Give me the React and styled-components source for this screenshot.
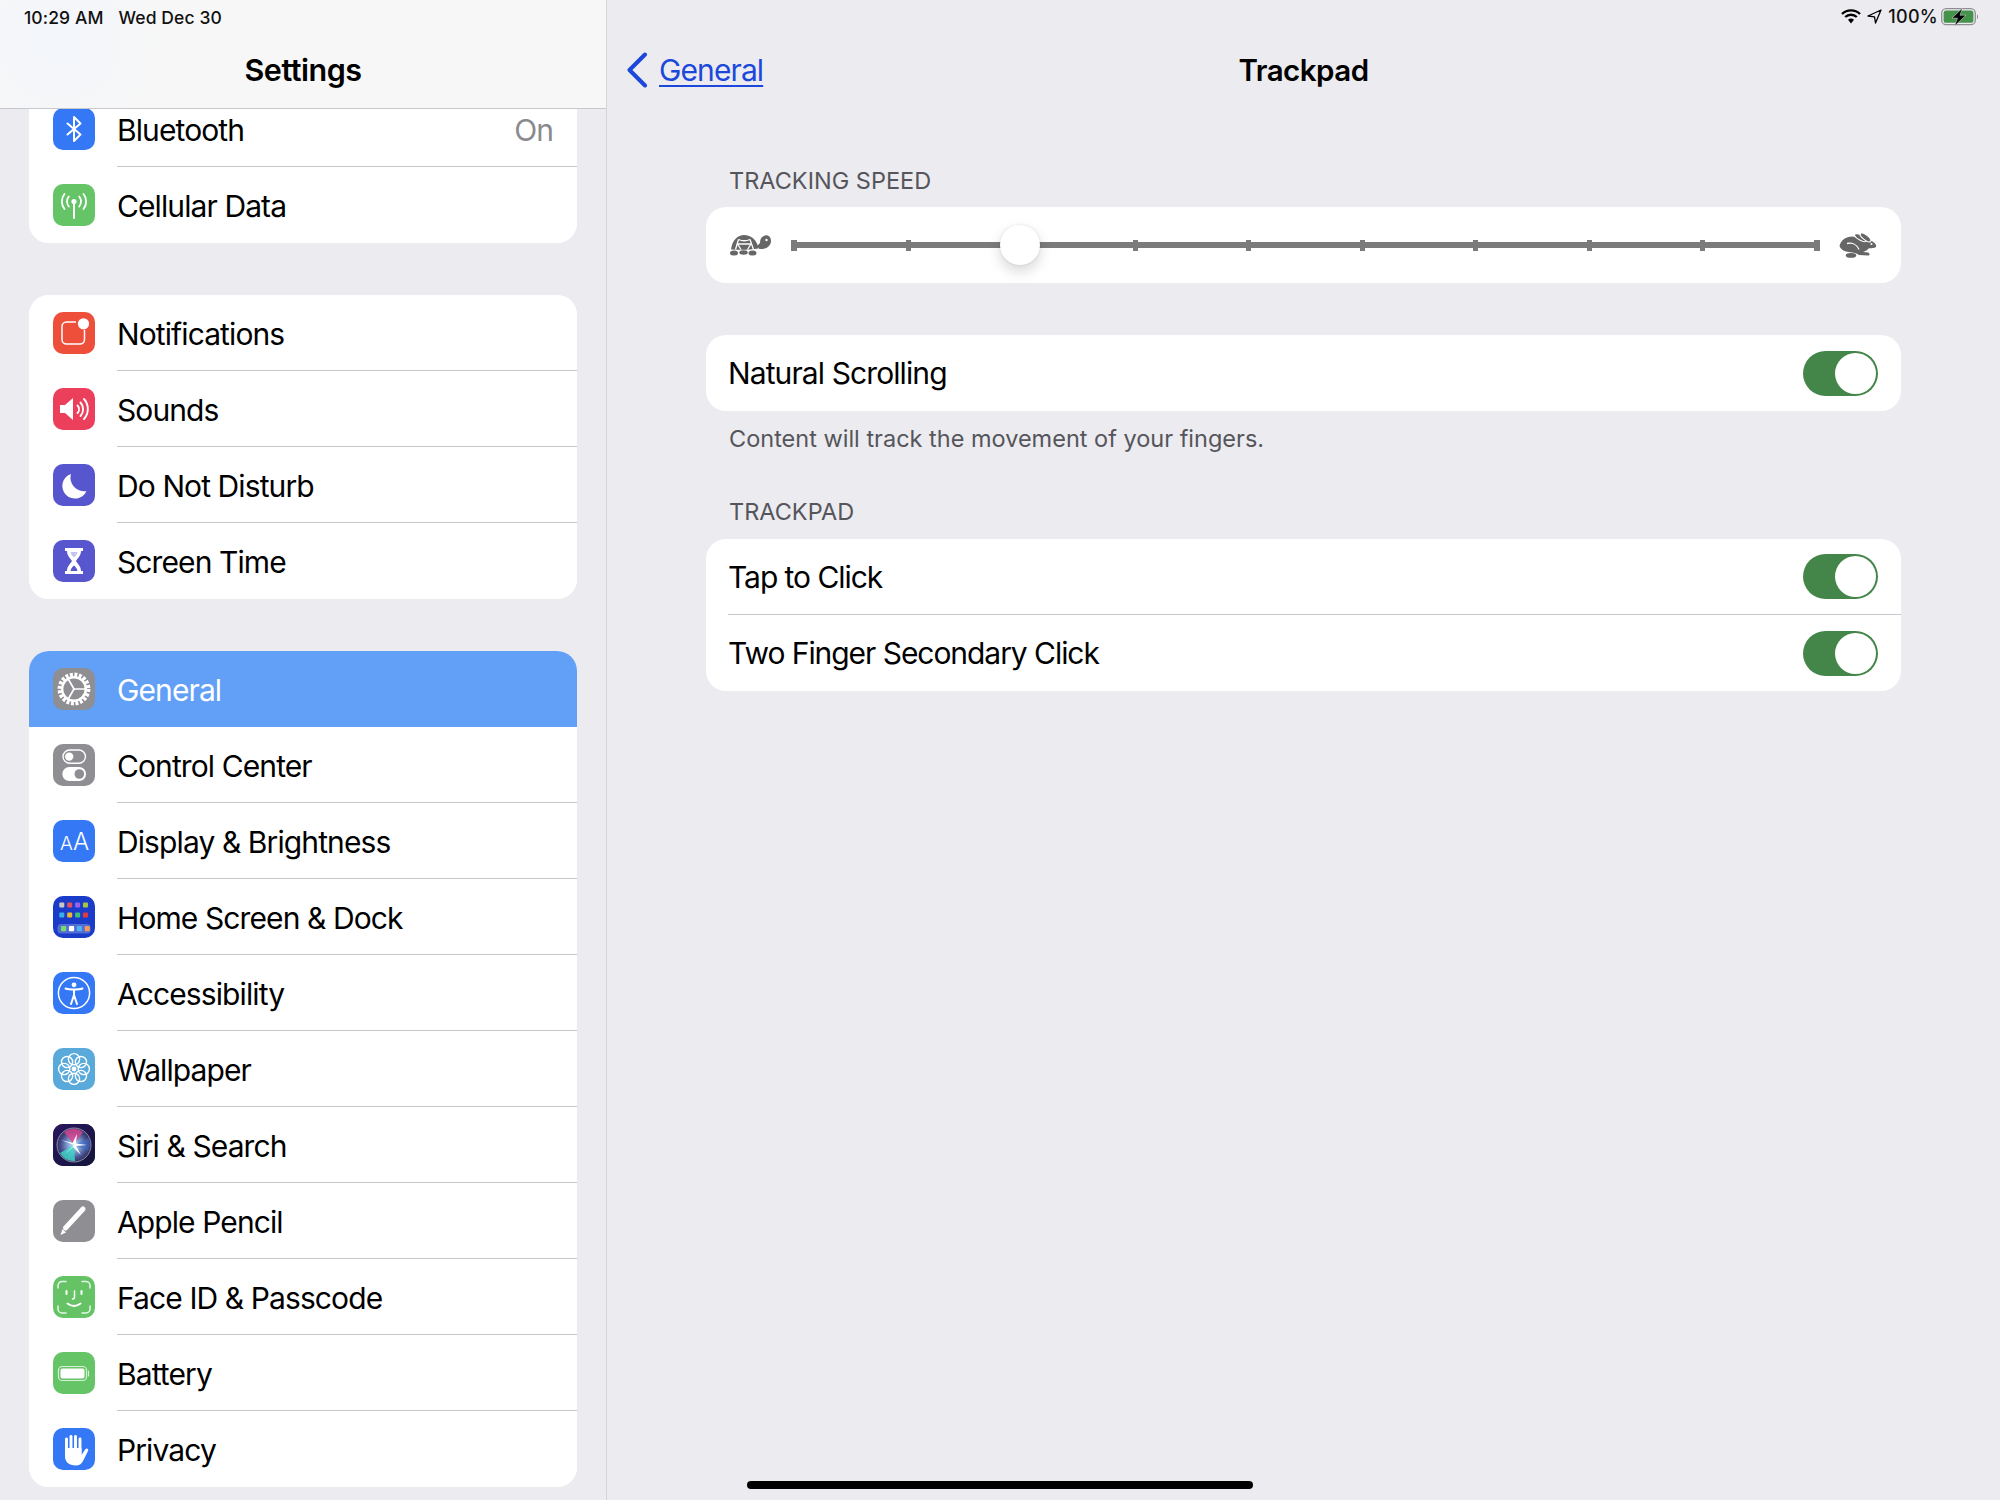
import React from 'react'
import styled, { createGlobalStyle } from 'styled-components'

const Global = createGlobalStyle`
  html, body {
    margin: 0;
    padding: 0;
    background: #ebebf0;
  }
  body {
    font-family: Inter, "Noto Sans", "Liberation Sans", sans-serif;
    color: #000;
  }
`

const Screen = styled.div`
  width: 2000px;
  height: 1500px;
  display: flex;
  overflow: hidden;
  position: relative;
  background: #ebebf0;
`

const Sidebar = styled.aside`
  width: 606px;
  height: 100%;
  flex: none;
  position: relative;
  overflow: hidden;
  border-right: 1px solid #d4d4d9;
`

const SideHeader = styled.header`
  position: absolute;
  top: 0;
  left: 0;
  right: 0;
  height: 109px;
  box-sizing: border-box;
  border-bottom: 1px solid #c8c8cc;
  background: radial-gradient(circle at 60px 40px, #f3f6fb 0, #f7f7f7 110px);
  z-index: 2;
`

const StatusText = styled.div`
  display: flex;
  gap: 15px;
  padding: 7px 0 0 24px;
  font-size: 17.5px;
  line-height: 21px;
  font-weight: 500;
  letter-spacing: 0.1px;
  color: #111;
`

const SideTitle = styled.h1`
  margin: 23px 0 0;
  text-align: center;
  font-size: 30.5px;
  line-height: 38px;
  font-weight: 600;
  letter-spacing: -0.5px;
`

const SideList = styled.div`
  display: flex;
  flex-direction: column;
  gap: 52px;
  padding: 91px 29px 0;
`

const Group = styled.section`
  background: #fff;
  border-radius: 20px;
  overflow: hidden;
`

const Row = styled.div`
  height: 76px;
  display: flex;
  align-items: center;
  gap: 23px;
  padding-left: 24px;
  background: ${p => (p.$active ? '#62a0f7' : '#fff')};
  color: ${p => (p.$active ? '#fff' : '#000')};
`

const RowBody = styled.div`
  flex: 1;
  height: 100%;
  box-sizing: border-box;
  display: flex;
  align-items: center;
  justify-content: space-between;
  padding: 2px 24px 0 0;
  margin-left: -1px;
  border-bottom: ${p => (p.$plain ? 'none' : '1px solid #c8c8cc')};
`

const Label = styled.span`
  font-size: 30px;
  letter-spacing: -0.9px;
  white-space: nowrap;
`

const WideLabel = styled(Label)`
  letter-spacing: -1.05px;
`

const Value = styled(Label)`
  color: #8a8a8e;
`

const Tile = styled.div`
  width: 42px;
  height: 42px;
  flex: none;
  border-radius: 10px;
  overflow: hidden;
  background: ${p => p.$bg};
  svg {
    display: block;
  }
`

const Detail = styled.main`
  flex: 1;
  min-width: 0;
  display: flex;
  flex-direction: column;
`

const StatusRight = styled.div`
  height: 33px;
  display: flex;
  align-items: center;
  justify-content: flex-end;
  gap: 6px;
  padding: 0 21px 0 0;
  font-size: 18px;
  font-weight: 500;
  color: #111;
`

const StatusPct = styled.span`
  margin: 0 -3px 0 0;
  letter-spacing: 0.3px;
`

const Nav = styled.nav`
  height: 74px;
  display: grid;
  grid-template-columns: 1fr auto 1fr;
  align-items: center;
`

const Back = styled.a`
  display: flex;
  align-items: center;
  gap: 11px;
  padding-left: 19px;
  color: #1b48da;
  font-size: 30px;
  letter-spacing: -0.9px;
  text-decoration: underline;
  text-decoration-thickness: 2px;
  text-underline-offset: 4px;
`

const NavTitle = styled.h2`
  margin: 0;
  font-size: 29.5px;
  font-weight: 600;
  letter-spacing: -0.5px;
`

const Content = styled.div`
  padding: 59px 99px 0;
  display: flex;
  flex-direction: column;
`

const Caption = styled.div`
  padding-left: 23px;
  font-size: 23.5px;
  line-height: 30px;
  letter-spacing: 0;
  color: #55555b;
  margin-top: ${p => p.$top || 0}px;
  margin-bottom: ${p => p.$bottom || 0}px;
`

const Card = styled.section`
  background: #fff;
  border-radius: 20px;
  overflow: hidden;
  margin-top: ${p => p.$top || 0}px;
`

const SliderRow = styled.div`
  height: 76px;
  display: flex;
  align-items: center;
  padding: 0 24px;
  gap: 20px;
`

const Track = styled.div`
  flex: 1;
  height: 6px;
  margin-right: -1px;
  position: relative;
  background: #7b7b7b;
  display: flex;
  align-items: center;
  justify-content: space-between;
`

const Tick = styled.i`
  display: block;
  width: ${p => (p.$end ? 6 : 5)}px;
  height: 11px;
  background: #7b7b7b;
`

const Thumb = styled.div`
  position: absolute;
  top: 50%;
  width: 40px;
  height: 40px;
  margin: -20px 0 0 -20px;
  border-radius: 50%;
  background: #fff;
  box-shadow: 0 6px 14px rgba(0, 0, 0, 0.16), 0 0 3px rgba(0, 0, 0, 0.1);
`

const ToggleRow = styled.div`
  height: 76px;
  display: flex;
  align-items: center;
  padding-left: 22px;
`

const ToggleBody = styled.div`
  flex: 1;
  height: 100%;
  box-sizing: border-box;
  display: flex;
  align-items: center;
  justify-content: space-between;
  padding-right: 23px;
  border-bottom: ${p => (p.$plain ? 'none' : '1px solid #c8c8cc')};
`

const Toggle = styled.div`
  width: 75px;
  height: 45px;
  box-sizing: border-box;
  padding: 2px;
  border-radius: 23px;
  background: #44864a;
  display: flex;
  justify-content: flex-end;
  &::after {
    content: '';
    width: 41px;
    height: 41px;
    border-radius: 50%;
    background: #fff;
  }
`

const HomeBar = styled.div`
  position: absolute;
  left: 747px;
  bottom: 11px;
  width: 506px;
  height: 8px;
  border-radius: 4px;
  background: #000;
  z-index: 3;
`

const Svg = ({ children }) => (
  <svg width="42" height="42" viewBox="0 0 42 42" fill="none">
    {children}
  </svg>
)

const BluetoothIcon = () => (
  <Svg>
    <path d="M14.5 15.5 L27.5 26.5 L21 33 V9 L27.5 15.5 L14.5 26.5" stroke="#fff" strokeWidth="2" strokeLinecap="round" strokeLinejoin="round" />
  </Svg>
)

const CellularIcon = () => (
  <Svg>
    <circle cx="21" cy="17.5" r="2.6" fill="#fff" />
    <path d="M21 18 V34" stroke="#fff" strokeWidth="2" strokeLinecap="round" />
    <g stroke="#fff" strokeWidth="1.9" strokeLinecap="round">
      <path d="M15.8 12.5 A8 8 0 0 0 15.8 22.5" />
      <path d="M26.2 12.5 A8 8 0 0 1 26.2 22.5" />
      <path d="M11.5 10 A12 12 0 0 0 11.5 25" />
      <path d="M30.5 10 A12 12 0 0 1 30.5 25" />
    </g>
  </Svg>
)

const NotificationsIcon = () => (
  <Svg>
    <path d="M23 10 H13.5 A4.5 4.5 0 0 0 9 14.5 V27.5 A4.5 4.5 0 0 0 13.5 32 H27 A4.5 4.5 0 0 0 31.5 27.5 V18" stroke="#fff" strokeWidth="1.5" />
    <circle cx="30.5" cy="11.8" r="5.6" fill="#fff" />
  </Svg>
)

const SoundsIcon = () => (
  <Svg>
    <path d="M7 17 H12 L20 10 V32 L12 25 H7 Z" fill="#fff" strokeLinejoin="round" />
    <g stroke="#fff" strokeWidth="1.9" strokeLinecap="round">
      <path d="M24.5 17.5 A5.5 5.5 0 0 1 24.5 25" />
      <path d="M27.5 14.5 A10 10 0 0 1 27.5 28" />
      <path d="M31 11 A15 15 0 0 1 31 31" />
    </g>
  </Svg>
)

const MoonIcon = () => (
  <Svg>
    <path d="M18 10 A12.6 12.6 0 1 0 33.5 27 A13.5 13.5 0 0 1 18 10 Z" fill="#fff" />
  </Svg>
)

const HourglassIcon = () => (
  <Svg>
    <path d="M12 8 H30 V11 H28 C28 16 24 19 23 21 C24 23 28 26 28 31 H30 V34 H12 V31 H14 C14 26 18 23 19 21 C18 19 14 16 14 11 H12 Z" fill="#fff" />
    <path d="M17.5 31 C18 28 20 26.5 21 25.5 C22 26.5 24 28 24.5 31 Z" fill="#5856ce" />
    <path d="M17.5 12 H24.5 C24 14.5 22.5 16 21 17.5 C19.5 16 18 14.5 17.5 12 Z" fill="#5856ce" opacity="0.35" />
  </Svg>
)

const GearIcon = () => (
  <Svg>
    <circle cx="21" cy="21" r="14.2" stroke="#fff" strokeWidth="4.4" strokeDasharray="2.9 1.56" />
    <circle cx="21" cy="21" r="11.8" stroke="#fff" strokeWidth="2.4" />
    <g stroke="#fff" strokeWidth="1.7" strokeLinecap="round">
      <path d="M21 21 H32" />
      <path d="M21 21 L15.5 11.5" />
      <path d="M21 21 L15.5 30.5" />
    </g>
  </Svg>
)

const SwitchesIcon = () => (
  <Svg>
    <rect x="10" y="6" width="22.5" height="13.2" rx="6.6" stroke="#fff" strokeWidth="1.4" />
    <circle cx="16.2" cy="12.6" r="4.2" fill="#fff" />
    <rect x="9.3" y="23" width="23.8" height="14" rx="7" fill="#fff" />
    <circle cx="26.3" cy="30" r="4.8" fill="#8e8e93" />
  </Svg>
)

const DisplayIcon = () => (
  <Svg>
    <g fill="#fff" fontFamily="Inter, sans-serif" fontWeight="300">
      <text x="7" y="30" fontSize="19">A</text>
      <text x="20" y="30" fontSize="24">A</text>
    </g>
  </Svg>
)

const homeDots = [
  ['#c9c9c4', '#e8505b', '#9a62e8', '#a4c640'],
  ['#38b0e8', '#f2b632', '#3cc07a', '#e23b3b']
]
const dockDots = ['#77dd66', '#ffffff', '#4db4f0', '#f0995a']

const HomeIcon = () => (
  <Svg>
    {homeDots.map((line, r) =>
      line.map((c, i) => (
        <rect key={`${r}-${i}`} x={6.3 + i * 7.9} y={6.5 + r * 10} width="5" height="5" rx="1" fill={c} />
      ))
    )}
    <rect x="4.5" y="28" width="33" height="9.5" rx="3.5" fill="#fff" opacity="0.25" />
    {dockDots.map((c, i) => (
      <rect key={c} x={8 + i * 7.9} y="30" width="5.2" height="5.2" rx="1" fill={c} />
    ))}
  </Svg>
)

const AccessibilityIcon = () => (
  <Svg>
    <circle cx="21" cy="21" r="15.6" stroke="#fff" strokeWidth="1.5" />
    <circle cx="21" cy="12.8" r="2.4" fill="#fff" />
    <path d="M12.5 16.5 C16 17.8 26 17.8 29.5 16.5 M21 18 V23 M21 23 L18 32 M21 23 L24 32" stroke="#fff" strokeWidth="2" strokeLinecap="round" />
  </Svg>
)

const WallpaperIcon = () => (
  <Svg>
    <g stroke="#fff" strokeWidth="1.4">
      {[0, 45, 90, 135, 180, 225, 270, 315].map(a => (
        <circle key={a} cx="21" cy="11.2" r="5.6" transform={`rotate(${a} 21 21)`} />
      ))}
    </g>
    <circle cx="21" cy="21" r="2.4" fill="#fff" />
  </Svg>
)

const SiriIcon = () => (
  <Svg>
    <defs>
      <linearGradient id="siriBg" x1="0" y1="0" x2="1" y2="1">
        <stop offset="0" stopColor="#2a1560" />
        <stop offset="1" stopColor="#12163a" />
      </linearGradient>
      <radialGradient id="siriOrb" cx="0.5" cy="0.5" r="0.5">
        <stop offset="0" stopColor="#c8e8f5" />
        <stop offset="0.4" stopColor="#7f9ed0" />
        <stop offset="0.75" stopColor="#48508f" />
        <stop offset="1" stopColor="#33305f" />
      </radialGradient>
    </defs>
    <rect width="42" height="42" fill="url(#siriBg)" />
    <circle cx="21" cy="21" r="17" fill="url(#siriOrb)" stroke="#8c8ca8" strokeWidth="1" />
    <path d="M21 21 L11 8 A16 16 0 0 1 30 8 Z" fill="#d9438f" opacity="0.8" />
    <path d="M21 21 L36 14 A16 16 0 0 1 35 27 Z" fill="#3f6fd0" opacity="0.55" />
    <path d="M21 21 L7 29 A16 16 0 0 0 22 37 Z" fill="#3fd8c8" opacity="0.8" />
    <path d="M21 21 L8 16 L19.5 19 L24 10 L23 19.5 L34 21 L23 22 L28 31 L20 23 L12 30 Z" fill="#fff" />
  </Svg>
)

const PencilIcon = () => (
  <Svg>
    <path d="M12.5 28 L30 9" stroke="#fff" strokeWidth="5" strokeLinecap="round" />
    <path d="M9.5 29 L7.5 35 L13 32.5 Z" fill="#fff" />
  </Svg>
)

const FaceIcon = () => (
  <Svg>
    <g stroke="#fff" strokeWidth="1.5" strokeLinecap="round" fill="none" opacity="0.85">
      <path d="M5 12 V9.5 A4 4 0 0 1 9 5.5 H13" />
      <path d="M29 5.5 H33 A4 4 0 0 1 37 9.5 V12" />
      <path d="M5 30 V33 A4 4 0 0 0 9 37 H13" />
      <path d="M29 37 H33 A4 4 0 0 0 37 33 V30" />
    </g>
    <g stroke="#fff" strokeWidth="2" strokeLinecap="round" fill="none">
      <path d="M13.5 15 V18" />
      <path d="M28.5 15 V18" />
      <path d="M21.5 15 V21 Q21.5 23 19.5 23" strokeWidth="1.5" />
      <path d="M14.5 27.5 Q21 32.5 27.5 27.5" />
    </g>
  </Svg>
)

const BatteryIcon = () => (
  <Svg>
    <rect x="5.5" y="14.5" width="28" height="14" rx="3.6" stroke="#fff" strokeOpacity="0.75" strokeWidth="1.2" />
    <rect x="7.5" y="16.5" width="24" height="10" rx="2" fill="#fff" />
    <path d="M35.5 19 V24" stroke="#fff" strokeOpacity="0.75" strokeWidth="1.2" strokeLinecap="round" />
  </Svg>
)

const HandIcon = () => (
  <Svg>
    <g stroke="#fff" strokeWidth="2.9" strokeLinecap="round">
      <path d="M13.5 11 V26" />
      <path d="M18 8.5 V24" />
      <path d="M22.5 8.5 V24" />
      <path d="M27 11 V26" />
    </g>
    <path d="M12 20 H28.5 V27 L32.5 21 C34 19.5 36 21 35 23 L30 33 C28.5 36 26 37.5 22.5 37.5 C16 37.5 12 34 12 28 Z" fill="#fff" />
  </Svg>
)

const groups = [
  [
    { label: 'Bluetooth', bg: '#3478f6', Icon: BluetoothIcon, value: 'On' },
    { label: 'Cellular Data', bg: '#65c466', Icon: CellularIcon }
  ],
  [
    { label: 'Notifications', bg: '#ee4f3b', Icon: NotificationsIcon },
    { label: 'Sounds', bg: '#ec3f5c', Icon: SoundsIcon },
    { label: 'Do Not Disturb', bg: '#5856ce', Icon: MoonIcon },
    { label: 'Screen Time', bg: '#5856ce', Icon: HourglassIcon }
  ],
  [
    { label: 'General', bg: '#8e8e93', Icon: GearIcon, active: true },
    { label: 'Control Center', bg: '#8e8e93', Icon: SwitchesIcon },
    { label: 'Display & Brightness', bg: '#3478f6', Icon: DisplayIcon },
    { label: 'Home Screen & Dock', bg: '#1a3cc8', Icon: HomeIcon },
    { label: 'Accessibility', bg: '#3478f6', Icon: AccessibilityIcon },
    { label: 'Wallpaper', bg: '#59aadb', Icon: WallpaperIcon },
    { label: 'Siri & Search', bg: '#1a1640', Icon: SiriIcon },
    { label: 'Apple Pencil', bg: '#8e8e93', Icon: PencilIcon },
    { label: 'Face ID & Passcode', bg: '#65c466', Icon: FaceIcon },
    { label: 'Battery', bg: '#65c466', Icon: BatteryIcon },
    { label: 'Privacy', bg: '#3478f6', Icon: HandIcon }
  ]
]

const WifiGlyph = () => (
  <svg width="20" height="15" viewBox="0 0 20 15" fill="none">
    <g stroke="#000" strokeWidth="2.4">
      <path d="M1 5 A13 13 0 0 1 19 5" />
      <path d="M4.2 8 A8.4 8.4 0 0 1 15.8 8" />
    </g>
    <path d="M7 10.8 A4.4 4.4 0 0 1 13 10.8 L10 14.5 Z" fill="#000" />
  </svg>
)

const ArrowGlyph = () => (
  <svg width="15" height="15" viewBox="0 0 15 15" fill="none">
    <path d="M14 1 L1 7 L7.5 7.8 L8.5 14 Z" stroke="#000" strokeWidth="1.3" strokeLinejoin="round" />
  </svg>
)

const BatteryGlyph = () => (
  <svg width="38" height="18" viewBox="0 0 38 18" fill="none">
    <rect x="0.7" y="0.7" width="33.6" height="16" rx="4.5" stroke="#8f8f93" strokeWidth="1.3" />
    <rect x="2.6" y="2.6" width="29.8" height="12.2" rx="2.6" fill="#45934a" />
    <path d="M36 6.5 C37.4 7 37.4 10.5 36 11 Z" fill="#8f8f93" />
    <path d="M21.5 0 L11 10.2 H16.5 L13.5 18 L25 7.2 H19 Z" fill="#000" stroke="#ebebf0" strokeWidth="0.5" />
  </svg>
)

const Chevron = () => (
  <svg width="22" height="36" viewBox="0 0 22 36" fill="none">
    <path d="M19 2.5 L3.5 18 L19 33.5" stroke="#1b48da" strokeWidth="4" strokeLinecap="round" strokeLinejoin="round" />
  </svg>
)

const Turtle = () => (
  <svg width="41" height="22" viewBox="0 0 41 22" fill="#666">
    <path d="M1 15.5 C2 6 8 1 14 1 C21 1 27 6 28.5 14.5 C20 16 8 16 1 15.5 Z" />
    <g stroke="#fff" strokeWidth="1.3" fill="none">
      <path d="M8.5 5.5 C12 7 16.5 7 20 5.5" />
      <path d="M8.5 5.5 L5.5 15.5" />
      <path d="M20 5.5 L23.5 15.5" />
      <path d="M7.5 10 L11 15.5 M21 10 L17.5 15.5 M7.5 10 H21" />
    </g>
    <ellipse cx="4" cy="19" rx="4" ry="2.6" />
    <ellipse cx="13.5" cy="18.5" rx="4.2" ry="2.2" />
    <ellipse cx="22.5" cy="19" rx="4" ry="2.5" />
    <path d="M27 12 L29.5 15 C36 15.5 41 12 41 7 C41 3 38 0.8 35 1.5 C31.5 2.5 30 5.5 30 9 Z" />
    <circle cx="36.5" cy="6" r="1.2" fill="#fff" />
  </svg>
)

const Rabbit = () => (
  <svg width="38" height="26" viewBox="0 0 38 26" fill="#666">
    <path d="M0.5 14 C2 8 7 4.5 13 4.5 C17 4.5 20 7 24 8.5 C29 8 33 8.5 35 10.5 C37 12 37.5 13.5 37 15 C35 16.3 32 16.2 30 16.2 C28 18 27 19 24 20 L29 20.5 C31 21 31 23.5 29 23.5 L20 23 C16 20 10 20.5 7 19.5 C4 18.5 1.5 17 0.5 14 Z" />
    <ellipse cx="21.5" cy="5.6" rx="6.6" ry="2.5" transform="rotate(30 21.5 5.6)" stroke="#fff" strokeWidth="1.1" />
    <ellipse cx="26.5" cy="5.4" rx="6.4" ry="2.5" transform="rotate(38 26.5 5.4)" stroke="#fff" strokeWidth="1.1" />
    <ellipse cx="12" cy="23.4" rx="5.2" ry="2.3" />
    <path d="M8 11.5 C13 10.5 18 12.5 20 17.5" stroke="#fff" strokeWidth="1.3" fill="none" />
    <circle cx="32.5" cy="12" r="1" fill="#fff" />
  </svg>
)

const STOPS = 10

const Slider = ({ value }) => (
  <Track>
    {Array.from({ length: STOPS }, (_, i) => (
      <Tick key={i} $end={i === 0 || i === STOPS - 1} />
    ))}
    <Thumb style={{ left: `${(value / (STOPS - 1)) * 100}%` }} />
  </Track>
)

const App = () => (
  <Screen>
    <Global />
    <Sidebar>
      <SideHeader>
        <StatusText>
          <span>10:29 AM</span>
          <span>Wed Dec 30</span>
        </StatusText>
        <SideTitle>Settings</SideTitle>
      </SideHeader>
      <SideList>
        {groups.map((rows, g) => (
          <Group key={g}>
            {rows.map(({ label, bg, Icon, value, active }, i) => (
              <Row key={label} $active={active}>
                <Tile $bg={bg}>
                  <Icon />
                </Tile>
                <RowBody $plain={active || i === rows.length - 1}>
                  <Label>{label}</Label>
                  {value && <Value>{value}</Value>}
                </RowBody>
              </Row>
            ))}
          </Group>
        ))}
      </SideList>
    </Sidebar>

    <Detail>
      <StatusRight>
        <WifiGlyph />
        <ArrowGlyph />
        <StatusPct>100%</StatusPct>
        <BatteryGlyph />
      </StatusRight>
      <Nav>
        <Back>
          <Chevron />
          General
        </Back>
        <NavTitle>Trackpad</NavTitle>
      </Nav>

      <Content>
        <Caption $bottom={11}>TRACKING SPEED</Caption>
        <Card>
          <SliderRow>
            <Turtle />
            <Slider value={2} />
            <Rabbit />
          </SliderRow>
        </Card>

        <Card $top={52}>
          <ToggleRow>
            <ToggleBody $plain>
              <Label>Natural Scrolling</Label>
              <Toggle />
            </ToggleBody>
          </ToggleRow>
        </Card>
        <Caption $top={13}>Content will track the movement of your fingers.</Caption>

        <Caption $top={43} $bottom={12}>TRACKPAD</Caption>
        <Card>
          <ToggleRow>
            <ToggleBody>
              <WideLabel>Tap to Click</WideLabel>
              <Toggle />
            </ToggleBody>
          </ToggleRow>
          <ToggleRow>
            <ToggleBody $plain>
              <WideLabel>Two Finger Secondary Click</WideLabel>
              <Toggle />
            </ToggleBody>
          </ToggleRow>
        </Card>
      </Content>
    </Detail>
    <HomeBar />
  </Screen>
)

export default App
